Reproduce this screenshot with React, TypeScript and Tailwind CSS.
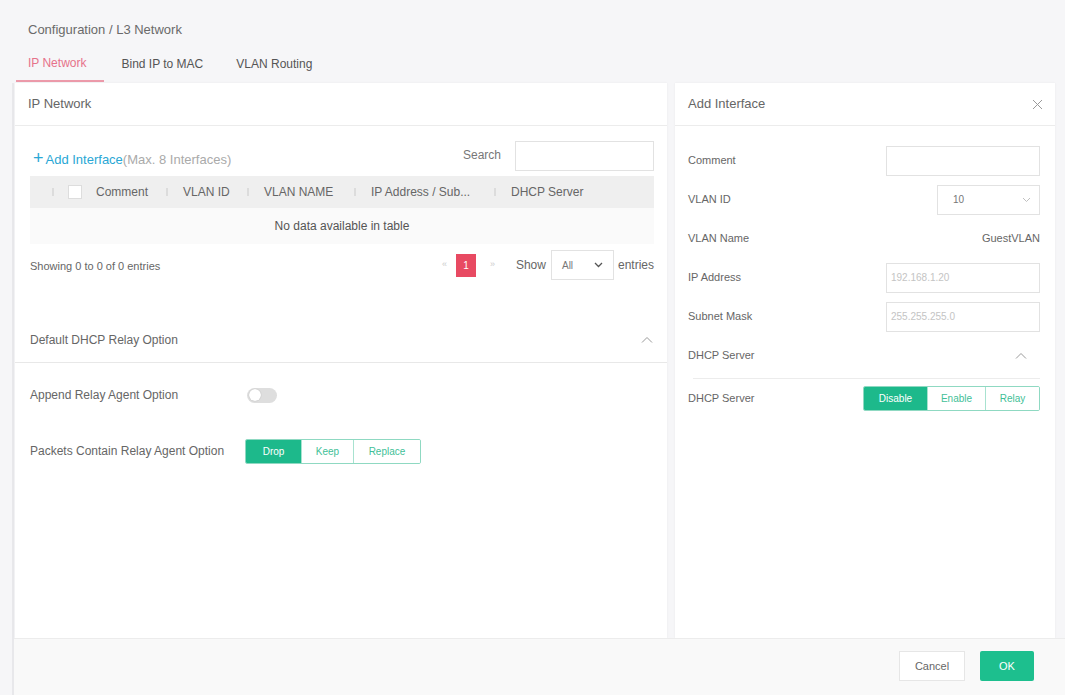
import React from "react";

const Sep = () => <span className="inline-block w-[2px] h-[8px] bg-[#dcdcdc] mr-[15px]" />;

const ChevronUp = ({ className = "" }: { className?: string }) => (
  <svg width="12" height="8" viewBox="0 0 12 8" className={className}>
    <path d="M1 6.5 L6 1.5 L11 6.5" fill="none" stroke="#9a9a9a" strokeWidth="1" />
  </svg>
);

const ChevronDown = ({ color = "#9a9a9a", w = 1 }: { color?: string; w?: number }) => (
  <svg width="9" height="6" viewBox="0 0 9 6">
    <path d="M1 1 L4.5 4.5 L8 1" fill="none" stroke={color} strokeWidth={w} />
  </svg>
);

function Segmented({ items, widths }: { items: string[]; widths: number[] }) {
  return (
    <div className="flex h-[25px] border border-[#8fd9c2] rounded-[2px] overflow-hidden">
      {items.map((it, i) => (
        <div
          key={it}
          style={{ width: widths[i] }}
          className={
            "flex items-center justify-center text-[10px] " +
            (i === 0
              ? "bg-[#1db98b] text-white"
              : "bg-white text-[#3fbf98] border-l border-[#a8e2d0]")
          }
        >
          {it}
        </div>
      ))}
    </div>
  );
}

export default function App() {
  return (
    <div
      className="w-[1065px] h-[695px] bg-[#f6f6f8] flex flex-col overflow-hidden text-[#5b5b5b] text-[12px]"
      style={{ fontFamily: "'Liberation Sans', Arial, sans-serif" }}
    >
      {/* Header */}
      <div className="h-[83px] flex flex-col">
        <div className="pl-[28px] pt-[20px] h-[45px] text-[13px] text-[#6a6a6a]">
          Configuration / L3 Network
        </div>
        <div className="flex pl-[16px] h-[38px]">
          <div className="pl-[12px] pr-[18px] flex items-center border-b-2 border-[#ec9aaa] text-[#e6728a] text-[12px] h-[37px]">
            IP Network
          </div>
          <div className="ml-[17px] flex items-center text-[12px] text-[#555] h-[37px]">Bind IP to MAC</div>
          <div className="ml-[33px] flex items-center text-[12px] text-[#555] h-[37px]">VLAN Routing</div>
        </div>
      </div>

      <div className="flex-1 flex flex-col ml-[12px] border-l-[2px] border-[#e8e8eb]">
        {/* Main */}
        <div className="flex-1 flex pl-[1px] pr-[10px] gap-[8px]">
          {/* Left panel */}
          <div className="w-[652px] bg-white flex flex-col shadow-[0_0_2px_rgba(0,0,0,0.06)]">
            <div className="h-[43px] border-b border-[#ececec] flex items-center pl-[13px] text-[13px] text-[#666]">
              IP Network
            </div>
            <div className="pl-[15px] pr-[13px]">
              <div className="flex items-end justify-between pt-[15px] h-[45px]">
                <div className="flex items-center pb-[2px] pl-[3px] text-[13px]">
                  <span className="text-[#2aa7d5] text-[18px] leading-none mr-[2px] -mt-[2px] font-light">+</span>
                  <span className="text-[#2aa7d5]">Add Interface</span>
                  <span className="text-[#aaa]">(Max. 8 Interfaces)</span>
                </div>
                <div className="flex items-center">
                  <span className="text-[12px] text-[#777] mr-[14px] -mt-[3px]">Search</span>
                  <div className="w-[139px] h-[30px] border border-[#e2e2e2] bg-white" />
                </div>
              </div>
              <div className="mt-[5px] h-[32px] bg-[#efefef] flex items-center text-[12px] text-[#666]">
                <div className="w-[58px] flex items-center pl-[22px]">
                  <span className="inline-block w-[2px] h-[8px] bg-[#dcdcdc]" />
                  <span className="ml-[14px] w-[14px] h-[14px] bg-white border border-[#ddd]" />
                </div>
                <div className="w-[78px] pl-[8px]">Comment</div>
                <div className="w-[81px] flex items-center"><Sep />VLAN ID</div>
                <div className="w-[107px] flex items-center"><Sep />VLAN NAME</div>
                <div className="w-[140px] flex items-center"><Sep />IP Address / Sub...</div>
                <div className="flex-1 flex items-center"><Sep />DHCP Server</div>
              </div>
              <div className="h-[36px] bg-[#fafafa] flex items-center justify-center text-[12px] text-[#555]">
                No data available in table
              </div>
              <div className="mt-[6px] h-[30px] flex items-center justify-between">
                <div className="text-[11px] text-[#666] pt-[2px]">Showing 0 to 0 of 0 entries</div>
                <div className="flex items-center text-[12px]">
                  <span className="text-[#ccc] text-[9px]">«</span>
                  <span className="ml-[9px] w-[20px] h-[23px] bg-[#e84a62] text-white flex items-center justify-center text-[10px]">1</span>
                  <span className="ml-[14px] text-[#ccc] text-[9px]">»</span>
                  <span className="ml-[21px] text-[#666]">Show</span>
                  <div className="ml-[5px] w-[63px] h-[30px] border border-[#e2e2e2] flex items-center justify-between px-[10px] text-[10px] text-[#777]">
                    <span>All</span>
                    <ChevronDown color="#555" w={1.3} />
                  </div>
                  <span className="ml-[4px] text-[#666]">entries</span>
                </div>
              </div>
            </div>
            <div className="mt-[38px] h-[45px] border-b border-[#e8e8e8] flex items-center justify-between pl-[15px] pr-[14px] text-[12px] text-[#666]">
              <span>Default DHCP Relay Option</span>
              <ChevronUp />
            </div>
            <div className="pl-[15px]">
              <div className="mt-[20px] h-[24px] flex items-center">
                <span className="w-[217px] text-[12px] text-[#666]">Append Relay Agent Option</span>
                <div className="w-[30px] h-[15px] rounded-full bg-[#dedede] flex items-center pl-[2px]">
                  <span className="w-[12px] h-[12px] rounded-full bg-white shadow-[0_0_1px_rgba(0,0,0,0.3)]" />
                </div>
              </div>
              <div className="mt-[31px] h-[26px] flex items-center">
                <span className="w-[215px] text-[12px] text-[#666]">Packets Contain Relay Agent Option</span>
                <Segmented items={["Drop", "Keep", "Replace"]} widths={[55, 52, 67]} />
              </div>
            </div>
          </div>

          {/* Right panel */}
          <div className="flex-1 bg-white flex flex-col shadow-[0_0_2px_rgba(0,0,0,0.06)]">
            <div className="h-[43px] border-b border-[#ececec] flex items-center justify-between pl-[13px] pr-[12px] text-[13px] text-[#666]">
              <span>Add Interface</span>
              <svg width="11" height="11" viewBox="0 0 11 11">
                <path d="M1 1 L10 10 M10 1 L1 10" stroke="#9a9a9a" strokeWidth="1" />
              </svg>
            </div>
            <div className="pl-[13px] pr-[15px] pt-[15px] text-[11px] text-[#666]">
              <div className="h-[39px] flex items-center justify-between">
                <span>Comment</span>
                <div className="w-[154px] h-[30px] border border-[#e2e2e2]" />
              </div>
              <div className="h-[39px] flex items-center justify-between">
                <span>VLAN ID</span>
                <div className="w-[103px] h-[30px] border border-[#e2e2e2] flex items-center justify-between pl-[15px] pr-[8px] text-[#777] text-[10px]">
                  <span>10</span>
                  <ChevronDown color="#c0c0c0" />
                </div>
              </div>
              <div className="h-[39px] flex items-center justify-between">
                <span>VLAN Name</span>
                <span className="text-[#666]">GuestVLAN</span>
              </div>
              <div className="h-[39px] flex items-center justify-between">
                <span>IP Address</span>
                <div className="w-[154px] h-[30px] border border-[#e2e2e2] flex items-center pl-[4px] text-[#c4c4c4] text-[10px]">
                  192.168.1.20
                </div>
              </div>
              <div className="h-[39px] flex items-center justify-between">
                <span>Subnet Mask</span>
                <div className="w-[154px] h-[30px] border border-[#e2e2e2] flex items-center pl-[4px] text-[#c4c4c4] text-[10px]">
                  255.255.255.0
                </div>
              </div>
              <div className="h-[39px] flex items-center justify-between pr-[13px]">
                <span>DHCP Server</span>
                <ChevronUp />
              </div>
              <div className="ml-[5px] mt-[3px] border-t border-[#ececec]" />
              <div className="h-[38px] flex items-center justify-between">
                <span>DHCP Server</span>
                <Segmented items={["Disable", "Enable", "Relay"]} widths={[63, 58, 54]} />
              </div>
            </div>
          </div>
        </div>

        {/* Footer */}
        <div className="h-[57px] flex items-center justify-end pr-[31px] pb-[2px] bg-[#f9f9f9] border-t border-[#ececec]">
          <div className="w-[66px] h-[30px] bg-white border border-[#e6e6e6] flex items-center justify-center text-[11px] text-[#666]">
            Cancel
          </div>
          <div className="ml-[15px] w-[54px] h-[30px] bg-[#1dbf8e] rounded-[2px] flex items-center justify-center text-[11px] text-white">
            OK
          </div>
        </div>
      </div>
    </div>
  );
}
